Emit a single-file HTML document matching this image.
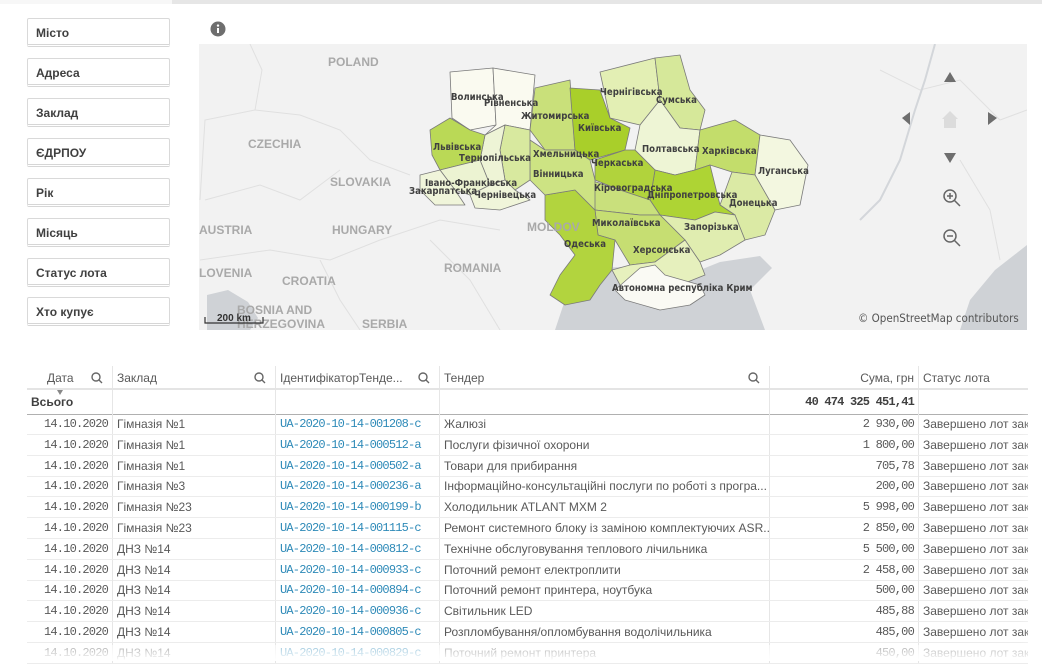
<!DOCTYPE html>
<html><head><meta charset="utf-8"><style>
*{margin:0;padding:0;box-sizing:border-box}
body{width:1058px;height:661px;overflow:hidden;background:#fff;font-family:"Liberation Sans","DejaVu Sans",sans-serif;position:relative}
.topbar{position:absolute;left:0;top:0;width:1042px;height:4px;background:#e6e6e6}
.topbar i{position:absolute;left:0;top:0;width:172px;height:4px;background:#f7f7f7}
.f{position:absolute;left:27px;width:143px;height:29px;border:1px solid #d9d9d9;border-bottom:3px double #d6d6d6;border-radius:2px;font-size:12px;font-weight:bold;color:#404040;padding:7px 0 0 8px}
.map{position:absolute;left:199px;top:44px;width:828px;height:286px;background:#f2f2f2;overflow:hidden}
.tbl{position:absolute;left:27px;top:366px;width:1001px;font-size:12px;color:#595959}
.row{position:absolute;left:0;width:1001px;height:21px;border-bottom:1px solid #ececec}
.c{position:absolute;top:0;height:100%;border-right:1px solid #e6e6e6;white-space:nowrap;overflow:hidden;line-height:20px;padding:0 4px}
.m{font-family:"Liberation Mono","DejaVu Sans Mono",monospace;font-size:12px;letter-spacing:-0.8px}
.lnk{color:#2e8ab8}
.lab{font-family:"DejaVu Sans Condensed","DejaVu Sans",sans-serif;font-size:9.5px;font-weight:bold;fill:#404040}
.cn{font-family:"Liberation Sans",sans-serif;font-size:12px;font-weight:bold;fill:#a9a9a9}
</style></head><body>
<div class="topbar"><i></i></div>
<div class="f" style="top:18px">Місто</div>
<div class="f" style="top:58px">Адреса</div>
<div class="f" style="top:98px">Заклад</div>
<div class="f" style="top:138px">ЄДРПОУ</div>
<div class="f" style="top:178px">Рік</div>
<div class="f" style="top:218px">Місяць</div>
<div class="f" style="top:258px">Статус лота</div>
<div class="f" style="top:297px">Хто купує</div>
<svg style="position:absolute;left:210px;top:21px" width="16" height="16" viewBox="0 0 16 16"><circle cx="8" cy="8" r="7.5" fill="#6e6e6e"/><rect x="7" y="7" width="2" height="5" fill="#fff"/><circle cx="8" cy="4.6" r="1.2" fill="#fff"/></svg>
<div class="map">
<svg width="828" height="286" viewBox="199 44 828 286">
<g fill="none" stroke="#e0e0e0" stroke-width="1">
<path d="M250 44 L262 70 L255 110 L205 120 L200 200"/>
<path d="M255 110 L300 115 L340 130 L370 160 L410 175"/>
<path d="M205 200 L260 185 L300 200 L340 170"/>
<path d="M200 260 L270 250 L330 260 L380 240 L440 220 L500 230"/>
<path d="M320 260 L340 300 L360 330"/>
<path d="M430 240 L470 280 L500 330"/>
<path d="M880 70 L920 90 L960 80 L1000 120 L1027 110"/>
<path d="M960 160 L990 210 L1000 260"/>
</g>
<path d="M935 44 L925 80 L915 110 L900 160 L880 200 L860 220" stroke="#d3d6da" stroke-width="2" fill="none"/>
<path d="M555 330 L565 300 L590 280 L600 268 L640 266 L700 270 L720 262 L760 256 L772 268 L750 290 L765 330 Z" fill="#cfd2d6"/>
<path d="M960 330 L970 300 L995 270 L1027 245 L1027 330 Z" fill="#cfd2d6"/>
<path d="M207 295 L228 290 L248 302 L258 318 L250 330 L207 330 Z" fill="#cfd2d6"/>
<g stroke="#7a7a7a" stroke-width="0.8" stroke-linejoin="round">
<path d="M450 72 L493 68 L496 125 L470 130 L452 118 Z" fill="#fafaf0"/>
<path d="M493 68 L535 75 L530 130 L505 125 L485 135 L496 125 Z" fill="#fafaf0"/>
<path d="M535 88 L570 80 L575 150 L545 150 L530 130 Z" fill="#c9e07a"/>
<path d="M570 88 L600 90 L610 118 L630 128 L625 150 L590 160 L575 150 Z" fill="#a9cf2a"/>
<path d="M600 72 L655 58 L660 100 L640 125 L610 118 Z" fill="#e3efb4"/>
<path d="M655 58 L680 55 L690 90 L705 110 L700 130 L680 128 L660 100 Z" fill="#d6e89a"/>
<path d="M640 125 L660 100 L680 128 L700 130 L695 170 L675 175 L655 170 L635 150 Z" fill="#eef5d5"/>
<path d="M700 130 L735 120 L760 135 L755 175 L732 172 L710 165 L695 170 Z" fill="#c3dd6b"/>
<path d="M760 135 L790 140 L808 165 L800 205 L775 210 L755 175 Z" fill="#f3f7e0"/>
<path d="M732 172 L755 175 L775 210 L765 235 L745 240 L735 215 L720 205 Z" fill="#dbeaa5"/>
<path d="M655 170 L675 175 L695 170 L710 165 L720 205 L735 215 L715 212 L695 220 L660 215 L650 200 Z" fill="#aed434"/>
<path d="M660 215 L695 220 L715 212 L735 215 L745 240 L720 255 L700 262 L685 240 Z" fill="#e0edb0"/>
<path d="M625 150 L635 150 L655 170 L650 200 L620 190 L595 180 L595 160 Z" fill="#b1d33c"/>
<path d="M590 180 L620 190 L650 200 L660 215 L640 215 L595 210 Z" fill="#c9e07c"/>
<path d="M595 210 L640 215 L660 215 L685 240 L655 262 L630 265 L615 240 L598 235 Z" fill="#c6de72"/>
<path d="M630 265 L655 262 L685 240 L700 262 L705 275 L680 285 L620 285 L612 270 Z" fill="#e6f0bd"/>
<path d="M545 195 L575 190 L595 210 L598 235 L615 240 L612 270 L600 285 L590 300 L565 305 L550 295 L560 275 L575 255 L560 235 L545 220 Z" fill="#b2d43e"/>
<path d="M530 140 L545 150 L575 150 L590 160 L595 180 L595 210 L575 190 L545 195 L530 180 Z" fill="#cde383"/>
<path d="M505 125 L530 130 L530 180 L515 190 L505 180 L500 150 Z" fill="#d8e99f"/>
<path d="M485 135 L505 125 L500 150 L505 180 L490 185 L480 160 Z" fill="#eef4d6"/>
<path d="M430 130 L450 118 L470 130 L485 135 L480 160 L460 165 L440 170 L432 155 Z" fill="#bad956"/>
<path d="M440 170 L460 165 L480 160 L490 185 L470 195 L455 190 Z" fill="#ecf3d2"/>
<path d="M420 175 L440 170 L455 190 L465 205 L435 205 L420 190 Z" fill="#f0f5da"/>
<path d="M470 195 L490 185 L505 180 L515 190 L530 200 L500 210 L475 208 Z" fill="#f0f5da"/>
<path d="M640 268 L655 265 L665 275 L700 285 L705 295 L690 305 L660 310 L625 300 L615 290 Z" fill="#fafaf4"/>
</g>
<g class="cn"><text x="328" y="66">POLAND</text><text x="248" y="148">CZECHIA</text><text x="330" y="186">SLOVAKIA</text><text x="199" y="234">AUSTRIA</text><text x="332" y="234">HUNGARY</text><text x="199" y="277">LOVENIA</text><text x="282" y="285">CROATIA</text><text x="237" y="314">BOSNIA AND</text><text x="237" y="328">HERZEGOVINA</text><text x="362" y="328">SERBIA</text><text x="444" y="272">ROMANIA</text><text x="527" y="231">MOLDOV</text></g>
<g class="lab"><text x="451" y="100">Волинська</text><text x="484" y="106">Рівненська</text><text x="521" y="119">Житомирська</text><text x="578" y="131">Київська</text><text x="600" y="95">Чернігівська</text><text x="656" y="103">Сумська</text><text x="642" y="152">Полтавська</text><text x="702" y="154">Харківська</text><text x="758" y="174">Луганська</text><text x="533" y="157">Хмельницька</text><text x="459" y="161">Тернопільська</text><text x="433" y="150">Львівська</text><text x="591" y="166">Черкаська</text><text x="533" y="177">Вінницька</text><text x="425" y="186">Івано-Франківська</text><text x="409" y="194">Закарпатська</text><text x="474" y="198">Чернівецька</text><text x="594" y="191">Кіровоградська</text><text x="647" y="198">Дніпропетровська</text><text x="729" y="206">Донецька</text><text x="592" y="226">Миколаївська</text><text x="684" y="230">Запорізька</text><text x="564" y="247">Одеська</text><text x="633" y="253">Херсонська</text><text x="612" y="291">Автономна республіка Крим</text></g>
<g fill="#6e6e6e"><path d="M950 72 L956 82 L944 82 Z"/><path d="M944 153 L956 153 L950 163 Z"/><path d="M902 118 L910 112 L910 125 Z"/><path d="M997 118 L988 112 L988 125 Z"/></g>
<path d="M942 119 L950 111 L958 119 L956 119 L956 128 L944 128 L944 119 Z" fill="#dcdcdc"/>
<g fill="none" stroke="#666" stroke-width="1.5"><circle cx="950" cy="196" r="6"/><path d="M954 200 L960 206"/><path d="M947 196 H953 M950 193 V199"/><circle cx="950" cy="236" r="6"/><path d="M954 240 L960 246"/><path d="M947 236 H953"/></g>
<path d="M205 317 V323 H263 V317" fill="none" stroke="#333" stroke-width="1.2"/>
<text x="217" y="321" font-size="10" font-weight="bold" fill="#333" font-family="Liberation Sans">200 km</text>
<text x="858" y="322" font-size="11.5" fill="#555" font-family="DejaVu Sans Condensed,DejaVu Sans,sans-serif">© OpenStreetMap contributors</text>
</svg></div>

<div class="tbl">
<div class="row" style="top:0;height:24px;border-bottom:2px solid #e4e4e4">
<div class="c" style="left:0;width:86px;padding-left:20px;line-height:24px">Дата</div>
<div class="c" style="left:86px;width:163px;line-height:24px">Заклад</div>
<div class="c" style="left:249px;width:164px;line-height:24px">ІдентифікаторТенде...</div>
<div class="c" style="left:413px;width:330px;line-height:24px">Тендер</div>
<div class="c" style="left:743px;width:149px;text-align:right;line-height:24px">Сума, грн</div>
<div class="c" style="left:892px;width:109px;border:none;line-height:24px">Статус лота</div>
</div>
<div class="row" style="top:24px;height:25px;border-bottom:1px solid #b0b0b0">
<div class="c" style="left:0;width:86px;font-weight:bold;color:#404040;line-height:24px">Всього</div>
<div class="c" style="left:86px;width:163px"></div><div class="c" style="left:249px;width:164px"></div><div class="c" style="left:413px;width:330px"></div>
<div class="c m" style="left:743px;width:149px;text-align:right;font-weight:bold;color:#404040;line-height:24px">40 474 325 451,41</div>
</div>
</div>
<svg style="position:absolute;top:372px;left:0" width="1058" height="30"><g fill="none" stroke="#666" stroke-width="1.4" transform="translate(0,-372)"><circle cx="96" cy="377" r="4"/><circle cx="259" cy="377" r="4"/><circle cx="423" cy="377" r="4"/><circle cx="753" cy="377" r="4"/><path d="M99 380 L102 383 M262 380 L265 383 M426 380 L429 383 M756 380 L759 383"/></g><path d="M57 18 L63 18 L60 23 Z" fill="#888"/></svg>
<div id="rows"></div>
<div style="position:absolute;left:0;top:645px;width:1058px;height:16px;background:linear-gradient(rgba(255,255,255,0.5),#fff)"></div>
<div style="position:absolute;left:1020px;top:400px;width:38px;height:261px;background:linear-gradient(90deg,rgba(255,255,255,0),#fff)"></div>
<script>
var d=[["Гімназія №1","UA-2020-10-14-001208-c","Жалюзі","2 930,00"],["Гімназія №1","UA-2020-10-14-000512-a","Послуги фізичної охорони","1 800,00"],["Гімназія №1","UA-2020-10-14-000502-a","Товари для прибирання","705,78"],["Гімназія №3","UA-2020-10-14-000236-a","Інформаційно-консультаційні послуги по роботі з програ...","200,00"],["Гімназія №23","UA-2020-10-14-000199-b","Холодильник ATLANT MXM 2","5 998,00"],["Гімназія №23","UA-2020-10-14-001115-c","Ремонт системного блоку із заміною комплектуючих ASR...","2 850,00"],["ДНЗ №14","UA-2020-10-14-000812-c","Технічне обслуговування теплового лічильника","5 500,00"],["ДНЗ №14","UA-2020-10-14-000933-c","Поточний ремонт електроплити","2 458,00"],["ДНЗ №14","UA-2020-10-14-000894-c","Поточний ремонт принтера, ноутбука","500,00"],["ДНЗ №14","UA-2020-10-14-000936-c","Світильник LED","485,88"],["ДНЗ №14","UA-2020-10-14-000805-c","Розпломбування/опломбування водолічильника","485,00"],["ДНЗ №14","UA-2020-10-14-000829-c","Поточний ремонт принтера","450,00"]];
var h='';d.forEach(function(r,i){var t=414+i*20.8;h+='<div class="row" style="left:27px;top:'+t+'px;font-size:12px;color:#595959">'+
'<div class="c m" style="left:0;width:86px;text-align:right">14.10.2020</div>'+
'<div class="c" style="left:86px;width:163px">'+r[0]+'</div>'+
'<div class="c m lnk" style="left:249px;width:164px">'+r[1]+'</div>'+
'<div class="c" style="left:413px;width:330px">'+r[2]+'</div>'+
'<div class="c m" style="left:743px;width:149px;text-align:right">'+r[3]+'</div>'+
'<div class="c" style="left:892px;width:109px;border:none">Завершено лот закупівлі</div></div>';});
document.getElementById('rows').innerHTML=h;
</script>
</body></html>
